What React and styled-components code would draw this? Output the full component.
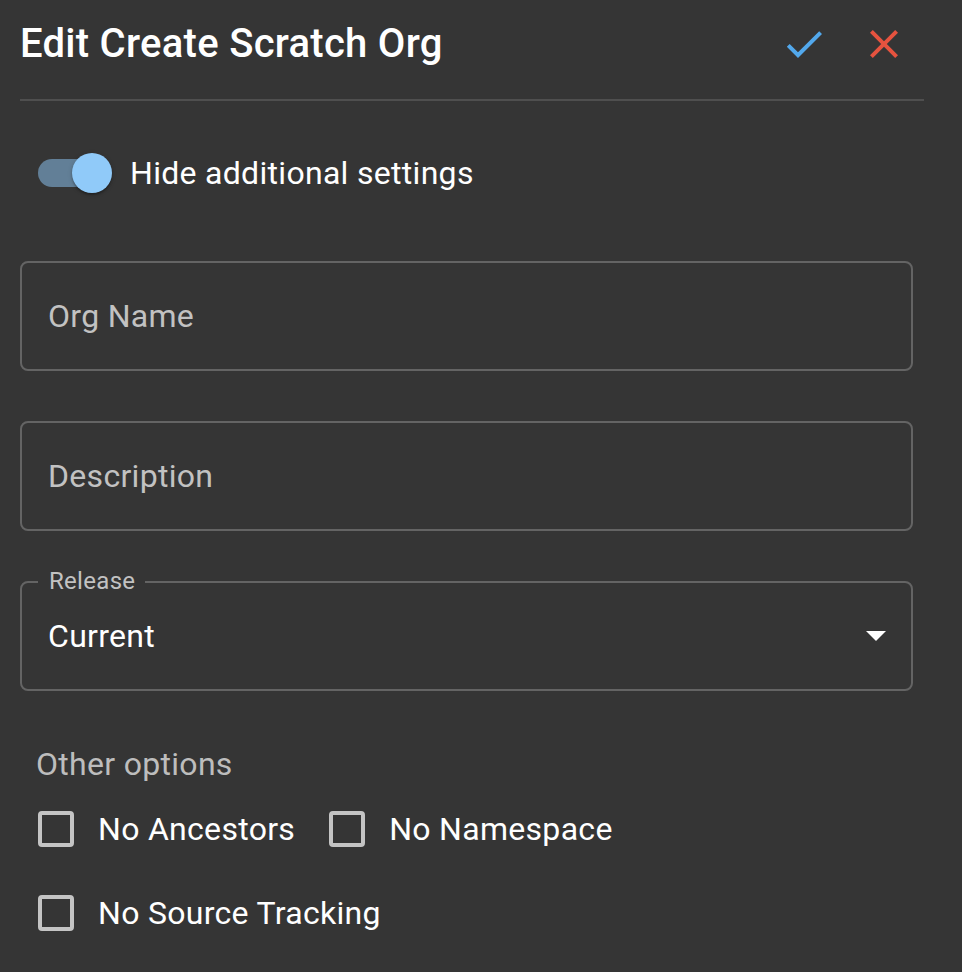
import React from 'react'
import styled, { createGlobalStyle } from 'styled-components'

const GlobalStyle = createGlobalStyle`
    html, body {
        margin: 0;
        background: #353535;
    }
    body {
        font-family: Roboto, "Liberation Sans", sans-serif;
        color: #ffffff;
    }
`

const Page = styled.div`
    min-height: 972px;
    padding: 4px 38px 0 20px;
    box-sizing: border-box;
`
const Header = styled.div`
    display: flex;
    align-items: center;
    justify-content: space-between;
    height: 80px;
`
const Title = styled.h1`
    margin: 0;
    font-size: 40px;
    font-weight: 500;
    line-height: 1.2;
    letter-spacing: 0.28px;
`
const Actions = styled.div`
    display: flex;
`
const IconButton = styled.button`
    width: 80px;
    height: 80px;
    padding: 16px;
    border: 0;
    border-radius: 50%;
    background: transparent;
    color: ${p => p.color};
    display: flex;
    align-items: center;
    justify-content: center;
    cursor: pointer;
    svg {
        width: 48px;
        height: 48px;
        fill: currentColor;
    }
`
const Divider = styled.hr`
    margin: 15px 0 0;
    border: 0;
    height: 2px;
    background: #4f4f4f;
`
const SwitchRow = styled.label`
    display: flex;
    align-items: center;
    height: 76px;
    margin-top: 34px;
    padding-left: 18px;
`
const SwitchBase = styled.span`
    position: relative;
    width: 74px;
    height: 40px;
    flex-shrink: 0;
`
const Track = styled.span`
    position: absolute;
    left: 0;
    top: 6px;
    width: 68px;
    height: 28px;
    border-radius: 14px;
    background: #627f97;
`
const Thumb = styled.span`
    position: absolute;
    left: 34px;
    top: 0;
    width: 40px;
    height: 40px;
    border-radius: 50%;
    background: #90caf9;
    box-shadow: 0 2px 2px rgba(0, 0, 0, 0.25), 0 1px 5px rgba(0, 0, 0, 0.15);
`
const RowLabel = styled.span`
    margin-left: 18px;
    font-size: 32px;
    line-height: 1.5;
    letter-spacing: 0.3px;
`
const Field = styled.div`
    position: relative;
    display: flex;
    align-items: center;
    justify-content: space-between;
    height: 110px;
    margin: 50px 11px 0 0;
    padding: 0 25px 0 26px;
    border: 2px solid #646464;
    border-radius: 8px;
    box-sizing: border-box;
`
const FieldText = styled.span`
    font-size: 32px;
    letter-spacing: 0.3px;
    color: ${p => (p.$placeholder ? '#c2c2c2' : '#ffffff')};
`
const FloatLabel = styled.span`
    position: absolute;
    left: 16px;
    top: -14px;
    padding: 0 10px 0 11px;
    background: #353535;
    font-size: 24px;
    line-height: 24px;
    letter-spacing: 0.3px;
    color: #c2c2c2;
`
const GroupLabel = styled.div`
    margin: 50px 0 0 16px;
    font-size: 32px;
    line-height: 46px;
    letter-spacing: 0.3px;
    color: #bdbdbd;
`
const CheckRow = styled.div`
    display: flex;
    align-items: center;
    gap: 34px;
    height: 84px;
    padding-left: 18px;
`
const CheckItem = styled.label`
    display: flex;
    align-items: center;
`
const Box = styled.span`
    width: 36px;
    height: 36px;
    border: 4px solid #c4c4c4;
    border-radius: 4px;
    box-sizing: border-box;
`
const CheckLabel = styled.span`
    margin-left: 24px;
    font-size: 32px;
    letter-spacing: 0.3px;
`

const CheckIcon = () => (
    <svg viewBox="0 0 24 24"><path d="M9 16.17 4.83 12l-1.42 1.41L9 19 21 7l-1.41-1.41z" /></svg>
)
const CloseIcon = () => (
    <svg viewBox="0 0 24 24"><path d="M19 6.41 17.59 5 12 10.59 6.41 5 5 6.41 10.59 12 5 17.59 6.41 19 12 13.41 17.59 19 19 17.59 13.41 12z" /></svg>
)
const ArrowDrop = styled.svg`
    width: 20px;
    height: 10px;
    fill: #ffffff;
`

const Option = ({ label }) => (
    <CheckItem>
        <Box />
        <CheckLabel>{label}</CheckLabel>
    </CheckItem>
)

const App = () => {
    return <Page>
        <GlobalStyle />
        <Header>
            <Title>Edit Create Scratch Org</Title>
            <Actions>
                <IconButton color="#52a8ec" aria-label="save"><CheckIcon /></IconButton>
                <IconButton color="#e6533f" aria-label="cancel"><CloseIcon /></IconButton>
            </Actions>
        </Header>
        <Divider />
        <SwitchRow>
            <SwitchBase>
                <Track />
                <Thumb />
            </SwitchBase>
            <RowLabel>Hide additional settings</RowLabel>
        </SwitchRow>
        <Field>
            <FieldText $placeholder>Org Name</FieldText>
        </Field>
        <Field>
            <FieldText $placeholder>Description</FieldText>
        </Field>
        <Field>
            <FloatLabel>Release</FloatLabel>
            <FieldText>Current</FieldText>
            <ArrowDrop viewBox="7 10 10 5"><path d="M7 10l5 5 5-5z" /></ArrowDrop>
        </Field>
        <GroupLabel>Other options</GroupLabel>
        <CheckRow>
            <Option label="No Ancestors" />
            <Option label="No Namespace" />
        </CheckRow>
        <CheckRow>
            <Option label="No Source Tracking" />
        </CheckRow>
    </Page>
}

export default App
